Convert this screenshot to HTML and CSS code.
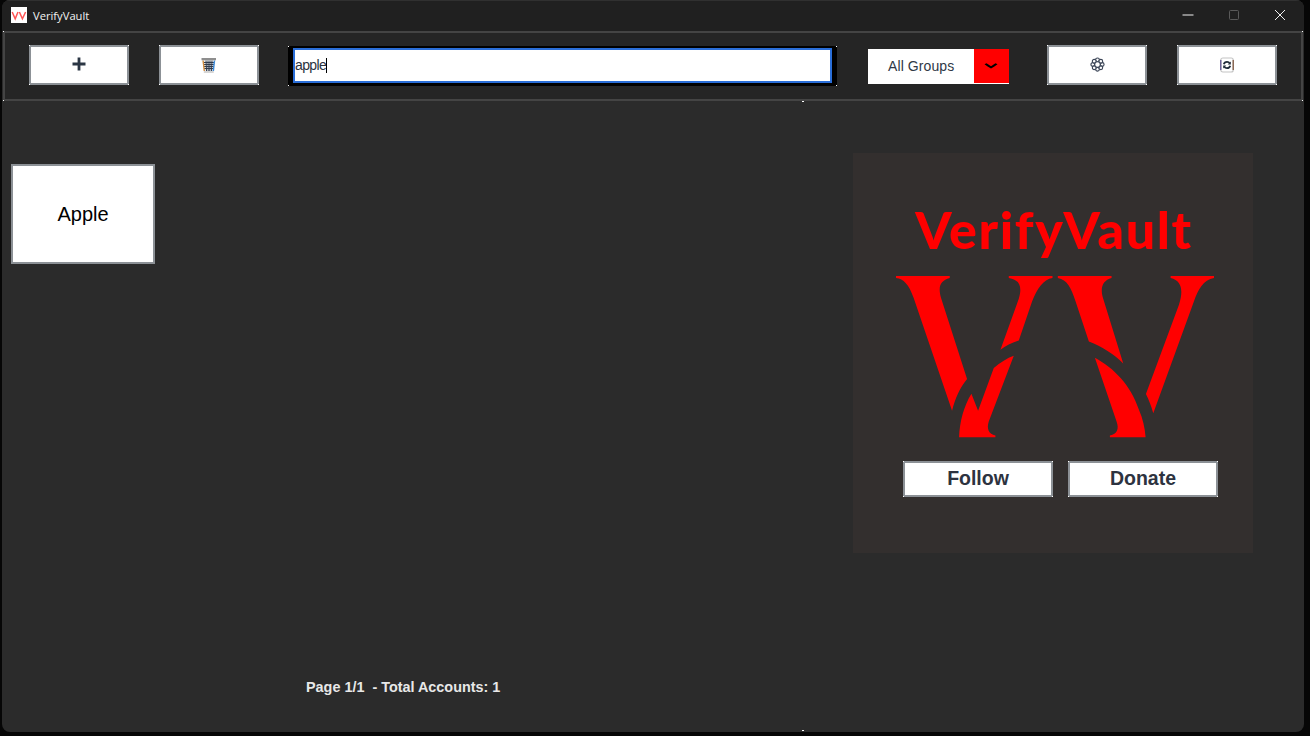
FILE: index.html
```html
<!DOCTYPE html>
<html lang="en">
<head>
<meta charset="utf-8">
<title>VerifyVault</title>
<link rel="stylesheet" href="styles.css">
</head>
<body>
<div class="window">
  <header class="titlebar">
    <div class="app-icon">
      <svg viewBox="0 0 16 16" width="16" height="16"><path class="app-icon-mark" d="M1.2 5 4.2 11.8 7 5M8.4 5 11.4 11.8 14.6 5"/></svg>
    </div>
    <span class="app-title">VerifyVault</span>
    <div class="win-controls">
      <svg class="win-btn" viewBox="0 0 12 12" width="12" height="12"><path class="win-min" d="M0.5 6H11.5"/></svg>
      <svg class="win-btn" viewBox="0 0 12 12" width="12" height="12"><rect class="win-max" x="1.5" y="1.5" width="9" height="9" rx="1"/></svg>
      <svg class="win-btn" viewBox="0 0 12 12" width="12" height="12"><path class="win-min" d="M1 1 11 11M11 1 1 11"/></svg>
    </div>
  </header>

  <section class="toolbar">
    <button class="tool-btn" aria-label="Add">
      <svg class="icon-up" viewBox="0 0 14 14" width="14" height="14"><path class="icon-plus" d="M7 0.5V13.5M0.5 7H13.5"/></svg>
    </button>
    <button class="tool-btn" aria-label="Delete">
      <svg viewBox="0.5 0 16 16" width="16" height="16">
        <path class="icon-trash-body" d="M1.5 2.5H15L13.7 14.5H3.8Z"/>
        <path class="icon-trash-hatch" d="M5.5 3.5 6 14M7.5 3.5 7.7 14M9.5 3.5 9.3 14M11.5 3.5 11 14M3.5 5.5H13.5M3.5 7.5H13.5M3.5 9.5H13.5M3.5 11.5H13.5"/>
        <path class="icon-trash-left" d="M2.6 3.5 3.8 14"/>
        <path class="icon-trash-right" d="M14 3.5 12.8 14"/>
        <path class="icon-trash-rim" d="M1 2.2H15.5"/>
        <path class="icon-trash-base" d="M3.3 15H13.2"/>
      </svg>
    </button>
    <div class="search corners">
      <div class="search-field"><span class="search-text">apple</span><span class="caret"></span></div>
    </div>
    <div class="combo">
      <span class="combo-label">All Groups</span>
      <span class="combo-arrow">
        <svg viewBox="0 0 14 6" width="14" height="6"><path class="icon-chevron" d="M0.5 1.3 2.5 0.3 7 3.2 11.5 0.3 13.5 1.3 10 3.8 7 5.4 4 3.8Z"/></svg>
      </span>
    </div>
    <button class="tool-btn" aria-label="Settings">
      <svg class="icon-up" viewBox="0 0 16 16" width="15" height="15">
        <circle class="icon-petal" cx="8" cy="3" r="2"/>
        <circle class="icon-petal" cx="8" cy="13" r="2"/>
        <circle class="icon-petal" cx="3" cy="8" r="2"/>
        <circle class="icon-petal" cx="13" cy="8" r="2"/>
        <circle class="icon-petal" cx="4.5" cy="4.5" r="2"/>
        <circle class="icon-petal" cx="11.5" cy="4.5" r="2"/>
        <circle class="icon-petal" cx="4.5" cy="11.5" r="2"/>
        <circle class="icon-petal" cx="11.5" cy="11.5" r="2"/>
        <circle class="icon-petal" cx="8" cy="8" r="3"/>
      </svg>
    </button>
    <button class="tool-btn" aria-label="Refresh">
      <svg viewBox="0 0 16 16" width="16" height="16">
        <rect class="icon-refresh-box" x="1.8" y="1" width="12.4" height="14" rx="2"/>
        <path class="icon-refresh-left" d="M1.8 3V13"/>
        <path class="icon-refresh-right" d="M14.2 3V13"/>
        <path class="icon-refresh-arrow" d="M4.8 7.2C5.2 5.6 6.5 4.8 8 4.8 9.2 4.8 10.2 5.4 10.8 6.4M11.2 8.8C10.8 10.4 9.5 11.2 8 11.2 6.8 11.2 5.8 10.6 5.2 9.6"/>
        <path class="icon-refresh-head" d="M11.8 4.4V7.6H8.7ZM4.2 11.6V8.4H7.3Z"/>
      </svg>
    </button>
  </section>

  <main class="content">
    <div class="accounts">
      <button class="account-card">Apple</button>
      <p class="pager">Page 1/1  - Total Accounts: 1</p>
    </div>
    <aside class="promo">
      <h1 class="promo-title">VerifyVault</h1>
      <svg class="promo-logo" viewBox="47 244 953 484" width="318" height="161.5">
        <path class="logo-fill" d="M47 244H208V250C180 258 172 275 182 310L260 553C238 580 224 612 215 648L100 310C85 268 70 253 47 250Z"/>
        <path class="logo-fill" d="M385 244H516V250C488 254 470 282 455 320L415 437C395 443 376 453 360 465L415 312C425 280 420 255 385 250Z"/>
        <path class="logo-fill" d="M400 483 325 680C318 702 325 718 345 722V727H236C238 680 250 635 273 597L293 648 340 520C360 503 380 490 400 483Z"/>
        <path class="logo-fill" d="M532 244H693V250C665 258 658 280 668 312L728 506C700 478 665 455 625 440L585 320C572 280 560 255 532 250Z"/>
        <path class="logo-fill" d="M643 489C700 520 750 570 775 645 787 672 793 700 795 727H688V722C710 718 716 702 708 680Z"/>
        <path class="logo-fill" d="M870 244H1000V250C968 255 952 285 940 320L818 655C812 635 805 615 796 598L895 330C908 290 905 258 870 250Z"/>
      </svg>
      <div class="promo-actions">
        <button class="promo-btn">Follow</button>
        <button class="promo-btn">Donate</button>
      </div>
    </aside>
  </main>
</div>
</body>
</html>
```
FILE: styles.css
```css
* { box-sizing: border-box; }
html, body { margin: 0; height: 100%; }
body {
  width: 1310px;
  height: 736px;
  overflow: hidden;
  background: #060606;
  padding: 0 6px 4px 2px;
  font-family: "Liberation Sans", Arial, sans-serif;
}
button { font-family: inherit; cursor: default; padding: 0; margin: 0; }

.window {
  width: 100%;
  height: 100%;
  display: flex;
  flex-direction: column;
  background: #2b2b2b;
  border-radius: 8px;
  overflow: hidden;
}

/* Title bar */
.titlebar {
  height: 31px;
  flex: none;
  display: flex;
  align-items: center;
  padding: 0 0 2px 9px;
  background: #202020;
  border-top: 1px solid #303030;
}
.app-icon {
  width: 16px;
  height: 16px;
  background: #fff;
  display: flex;
  margin-right: 6px;
}
.app-icon-mark { fill: none; stroke: #f55; stroke-width: 1.5; }
.app-title {
  font-family: "Open Sans", "Noto Sans", sans-serif;
  font-size: 11.2px;
  color: #f2f2f2;
}
.win-controls {
  margin-left: auto;
  display: flex;
  gap: 34px;
  padding-right: 18px;
}
.win-btn { display: block; }
.win-min { fill: none; stroke: #f0f0f0; stroke-width: 1; }
.win-max { fill: none; stroke: #5a5a5a; stroke-width: 1; }

/* Toolbar */
.toolbar {
  position: relative;
  height: 70px;
  flex: none;
  margin: 0 1px;
  display: flex;
  align-items: center;
  gap: 30px;
  padding: 0 0 3px 24px;
  background: #252525;
  border: 2px solid #444;
}
.toolbar::before {
  content: "";
  position: absolute;
  inset: -2px;
  pointer-events: none;
  background:
    linear-gradient(#fff, #fff) left top / 1px 1px no-repeat,
    linear-gradient(#fff, #fff) right top / 1px 1px no-repeat,
    linear-gradient(#fff, #fff) left bottom / 1px 1px no-repeat,
    linear-gradient(#fff, #fff) right bottom / 1px 1px no-repeat;
}
.tool-btn, .promo-btn, .corners { position: relative; }
.tool-btn::after, .promo-btn::after, .corners::after {
  content: "";
  position: absolute;
  inset: -2px;
  pointer-events: none;
  background:
    linear-gradient(#fff, #fff) left top / 1px 1px no-repeat,
    linear-gradient(#fff, #fff) right top / 1px 1px no-repeat,
    linear-gradient(#fff, #fff) left bottom / 1px 1px no-repeat,
    linear-gradient(#fff, #fff) right bottom / 1px 1px no-repeat;
}
.corners::after { inset: 0; }
.tool-btn {
  width: 100px;
  height: 40px;
  flex: none;
  display: flex;
  align-items: center;
  justify-content: center;
  background: #fff;
  border: 2px solid #8c9196;
}
.icon-up { margin-bottom: 1px; }
.icon-plus { fill: none; stroke: #2b3644; stroke-width: 2.8; }
.icon-trash-body { fill: #eee; stroke: none; }
.icon-trash-hatch { fill: none; stroke: #2f3a4c; stroke-width: 1; }
.icon-trash-left { fill: none; stroke: #d08a3c; stroke-width: 1.4; }
.icon-trash-right { fill: none; stroke: #3b8bdc; stroke-width: 1.4; }
.icon-trash-rim { fill: none; stroke: #8e8e8e; stroke-width: 2.2; }
.icon-trash-base { fill: none; stroke: #c8c8c8; stroke-width: 1.6; }
.icon-petal { fill: #fff; stroke: #3a4456; stroke-width: 1.2; }
.icon-chevron { fill: #000; }
.icon-refresh-box { fill: #fff; stroke: #c4c4c4; stroke-width: 1.2; }
.icon-refresh-left { fill: none; stroke: #54468a; stroke-width: 1.2; }
.icon-refresh-right { fill: none; stroke: #7a5038; stroke-width: 1.2; }
.icon-refresh-arrow { fill: none; stroke: #1f2a3a; stroke-width: 1.8; }
.icon-refresh-head { fill: #1f2a3a; }

.search {
  width: 549px;
  height: 40px;
  flex: none;
  margin: 2px 0 0 -1px;
  padding: 2px 5px 3px 5px;
  background: #000;
}
.search-field {
  height: 100%;
  display: flex;
  align-items: center;
  padding-left: 0;
  background: #fff;
  border: 2px solid #2a6ed8;
}
.search-text { font-size: 14px; color: #2b3340; letter-spacing: -0.6px; }
.caret { width: 1px; height: 15px; background: #000; }

.combo {
  width: 141px;
  height: 35px;
  flex: none;
  margin: 4px 8px 0 1px;
  display: flex;
  background: #fff;
}
.combo-label {
  flex: 1;
  display: flex;
  align-items: center;
  padding: 0 0 2px 20px;
  font-size: 14px;
  letter-spacing: 0.1px;
  color: #2f3846;
}
.combo-arrow {
  width: 35px;
  display: flex;
  align-items: center;
  justify-content: center;
  padding: 0 1px 0 0;
  background: #f00;
  border-bottom: 1px solid #fff;
}

/* Content */
.content {
  position: relative;
  flex: 1;
  min-height: 0;
  display: flex;
}
.content::before, .content::after {
  content: "";
  position: absolute;
  left: 800px;
  width: 2px;
  height: 1px;
  background: #fff;
}
.content::before { top: 0; }
.content::after { bottom: 1px; }
.accounts {
  flex: 1;
  display: flex;
  flex-direction: column;
  align-items: flex-start;
  padding: 63px 0 37px 9px;
}
.account-card {
  width: 144px;
  height: 100px;
  background: #fff;
  border: 2px solid #8c9196;
  font-size: 20px;
  color: #000;
}
.pager {
  margin: auto 0 0 295px;
  font-size: 14.4px;
  font-weight: 700;
  line-height: 16px;
  color: #e8e8e8;
  white-space: pre;
}

/* Promo panel */
.promo {
  width: 400px;
  height: 400px;
  flex: none;
  margin: 52px 51px 0 0;
  display: flex;
  flex-direction: column;
  align-items: center;
  background: #332f2e;
}
.promo-title {
  margin: 45px 0 0 2px;
  height: 70px;
  font-family: "Lato", sans-serif;
  font-size: 52px;
  font-weight: 900;
  line-height: 62px;
  color: #f00;
  letter-spacing: 1.6px;
  white-space: nowrap;
}
.promo-logo { display: block; margin: 8px 0 0 3px; flex: none; }
.logo-fill { fill: #f00; }
.promo-actions {
  display: flex;
  gap: 15px;
  margin: 23px 0 0 15px;
}
.promo-btn {
  width: 150px;
  height: 36px;
  background: #fff;
  border: 2px solid #8c9196;
  font-size: 19.5px;
  font-weight: 700;
  color: #2d3340;
}
```
